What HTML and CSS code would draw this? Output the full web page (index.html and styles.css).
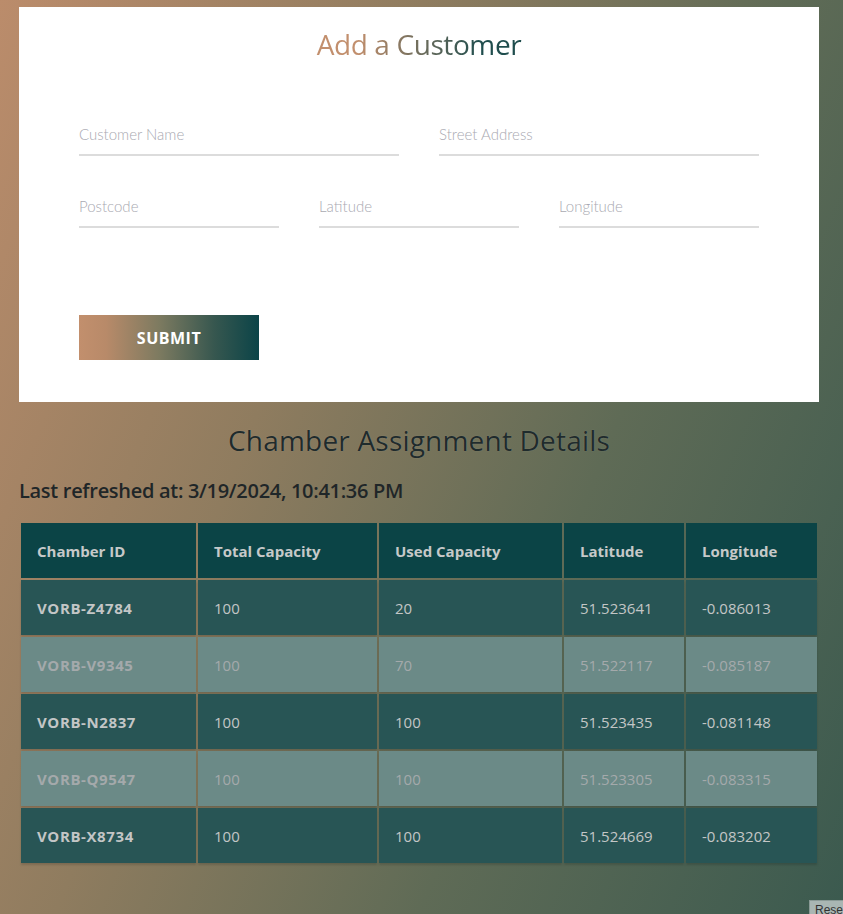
FILE: index.html
```html
<!DOCTYPE html>
<html>
<head>
<meta charset="utf-8">
<link rel="stylesheet" href="styles.css">
</head>
<body>
<div class="page">
  <section class="card">
    <h1 class="card-title">Add a Customer</h1>
    <form class="form">
      <div class="row row-2">
        <input class="field" type="text" placeholder="Customer Name">
        <input class="field" type="text" placeholder="Street Address">
      </div>
      <div class="row row-3">
        <input class="field" type="text" placeholder="Postcode">
        <input class="field" type="text" placeholder="Latitude">
        <input class="field" type="text" placeholder="Longitude">
      </div>
      <button class="submit" type="button">SUBMIT</button>
    </form>
  </section>

  <h2 class="section-title">Chamber Assignment Details</h2>
  <p class="refreshed">Last refreshed at: 3/19/2024, 10:41:36 PM</p>

  <table class="chambers">
    <colgroup>
      <col class="c1"><col class="c2"><col class="c3"><col class="c4"><col class="c5">
    </colgroup>
    <thead>
      <tr><th>Chamber ID</th><th>Total Capacity</th><th>Used Capacity</th><th>Latitude</th><th>Longitude</th></tr>
    </thead>
    <tbody>
      <tr class="dark"><td class="id">VORB-Z4784</td><td>100</td><td>20</td><td>51.523641</td><td>-0.086013</td></tr>
      <tr class="light"><td class="id">VORB-V9345</td><td>100</td><td>70</td><td>51.522117</td><td>-0.085187</td></tr>
      <tr class="dark"><td class="id">VORB-N2837</td><td>100</td><td>100</td><td>51.523435</td><td>-0.081148</td></tr>
      <tr class="light"><td class="id">VORB-Q9547</td><td>100</td><td>100</td><td>51.523305</td><td>-0.083315</td></tr>
      <tr class="dark"><td class="id">VORB-X8734</td><td>100</td><td>100</td><td>51.524669</td><td>-0.083202</td></tr>
    </tbody>
  </table>
</div>
<button class="reset" type="button">Rese</button>
</body>
</html>
```

FILE: styles.css
```css
html, body {
  margin: 0;
  padding: 0;
}
body {
  width: 843px;
  height: 914px;
  overflow: hidden;
  position: relative;
  background: linear-gradient(112deg, #bb8c6b 0%, #8f7c5f 35%, #5f6b56 65%, #3b5a4f 100%);
  font-family: "Open Sans", "Liberation Sans", sans-serif;
}
.page {
  padding: 7px 0 0 19px;
  width: 800px;
}
.card {
  background: #ffffff;
  height: 395px;
  box-sizing: border-box;
  padding: 23px 60px 0 60px;
}
.card-title {
  text-align: center;
  font-family: "Open Sans", sans-serif;
  font-weight: 400;
  font-size: 28px;
  line-height: 28px;
  letter-spacing: -0.4px;
  background: linear-gradient(90deg, #c28f6d 20%, #1f4d4d 80%);
  -webkit-background-clip: text;
  background-clip: text;
  color: transparent;
  width: 210px;
  margin: 0 auto;
}
.form {
  margin-top: 64px;
  display: flex;
  flex-direction: column;
}
.row {
  display: flex;
  gap: 40px;
}
.row-2 .field { width: 320px; }
.row-3 { margin-top: 38px; }
.row-3 .field { width: 200px; }
.field {
  box-sizing: border-box;
  border: none;
  border-bottom: 2px solid #dcdcdc;
  outline: none;
  padding: 0 0 8px 0;
  height: 34px;
  font-family: "Lato", sans-serif;
  font-weight: 300;
  font-size: 15px;
  background: transparent;
}
.field::placeholder {
  color: #a9a9b1;
}
.submit {
  margin-top: 87px;
  width: 180px;
  height: 45px;
  border: none;
  background: linear-gradient(90deg, #c28f6d 0%, #b88a69 15%, #7c7a60 45%, #37574f 75%, #0b4448 100%);
  color: #ffffff;
  font-family: "Open Sans", sans-serif;
  font-weight: 700;
  font-size: 16px;
  letter-spacing: 0.5px;
  padding: 0;
}
.section-title {
  margin: 20px 0 0 0;
  text-align: center;
  font-family: "Open Sans", sans-serif;
  font-weight: 500;
  font-size: 28px;
  line-height: 36px;
  letter-spacing: 0.2px;
  color: #1f2b2c;
  text-shadow: 0 0 1px rgba(255,255,255,0.25);
}
.refreshed {
  margin: 20px 0 0 0;
  font-family: "Open Sans", sans-serif;
  font-weight: 600;
  font-size: 20px;
  line-height: 26px;
  letter-spacing: -0.3px;
  color: #1f2628;
}
.chambers {
  margin-top: 17px;
  width: 800px;
  border-collapse: separate;
  border-spacing: 2px;
  font-family: "Open Sans", sans-serif;
  font-size: 15px;
}
.c1 { width: 175px; }
.c2 { width: 179px; }
.c3 { width: 183px; }
.c4 { width: 120px; }
.c5 { width: 131px; }
.chambers th, .chambers td {
  height: 55px;
  padding: 0 0 0 16px;
  text-align: left;
  box-sizing: border-box;
}
.chambers th {
  background: #0b4446;
  color: #c6c9c9;
  font-weight: 700;
}
.chambers td.id {
  font-weight: 700;
  letter-spacing: 0.6px;
}
.chambers td {
  font-weight: 400;
  box-shadow: 0 2px 2px rgba(0,0,0,0.15);
}
.dark td {
  background: #285555;
  color: #c3c6c6;
}
.light td {
  background: #6b8a87;
  color: #a4a9ab;
}
.reset {
  position: absolute;
  left: 809px;
  top: 900px;
  width: 34px;
  height: 14px;
  padding: 2px 0 0 5px;
  overflow: hidden;
  white-space: nowrap;
  text-align: left;
  border: 1px solid #8a9a96;
  border-right: none;
  border-bottom: none;
  background: #a9b6b3;
  color: #333;
  font-family: "Liberation Sans", sans-serif;
  font-size: 12px;
  line-height: 14px;
}
```
